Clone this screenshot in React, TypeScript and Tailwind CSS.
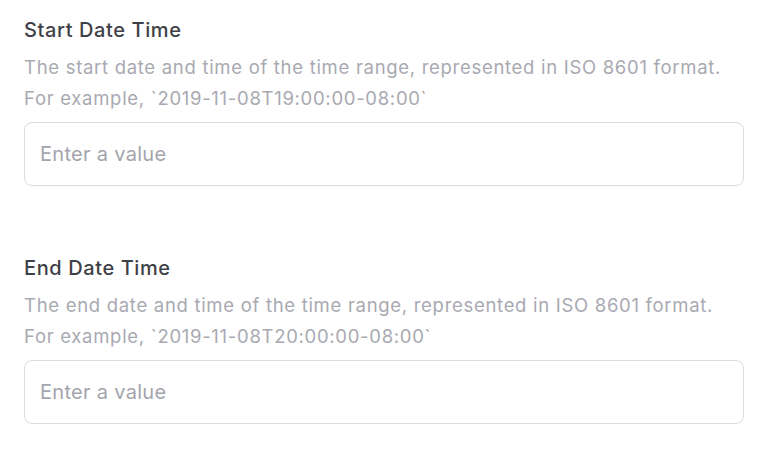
const fields = [
  {
    label: "Start Date Time",
    description: "The start date and time of the time range, represented in ISO 8601 format.",
    example: "For example, `2019-11-08T19:00:00-08:00`",
  },
  {
    label: "End Date Time",
    description: "The end date and time of the time range, represented in ISO 8601 format.",
    example: "For example, `2019-11-08T20:00:00-08:00`",
  },
];

export default function App() {
  return (
    <div className="min-h-screen bg-white px-6 pt-[16px] font-['Inter',sans-serif]">
      <div className="flex w-[720px] flex-col gap-[68px]">
        {fields.map((field) => (
          <div key={field.label} className="flex flex-col">
            <label className="text-[20px] leading-[28px] font-medium tracking-[0.6px] text-[#3f3f47]">{field.label}</label>
            <p className="mt-[8px] text-[18.5px] leading-[31px] tracking-[0.7px] text-[#a9a9b2]">
              {field.description}
              <br />
              {field.example}
            </p>
            <input
              placeholder="Enter a value"
              className="mt-[8px] h-[64px] w-full rounded-[8px] border border-[#dcdce0] px-[15px] text-[20px] tracking-[0.3px] text-[#3c3c44] outline-none placeholder:text-[#a4a4ad]"
            />
          </div>
        ))}
      </div>
    </div>
  );
}
